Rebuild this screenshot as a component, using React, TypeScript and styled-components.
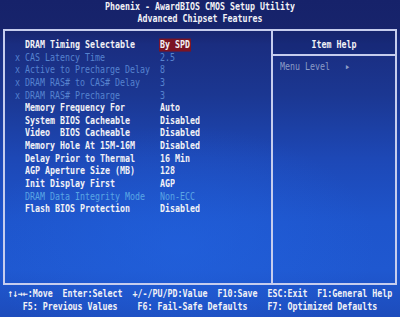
import React from "react";
import styled, { createGlobalStyle, css } from "styled-components";

const Global = createGlobalStyle`
  html, body { margin: 0; padding: 0; background: #17246a; }
  #root { width: 400px; height: 317px; overflow: hidden; }
`;

const CELL_H = 12.68;
const STRETCH = 1.3;
const TEXT_H = 9.6;
const GAP = (CELL_H - TEXT_H) / 2;

const stretched = css`
  height: ${TEXT_H}px;
  line-height: ${TEXT_H}px;
  margin: ${GAP}px 0;
  white-space: pre;
  transform: scaleY(${STRETCH});
`;

const Screen = styled.div`
  width: 400px;
  height: 317px;
  box-sizing: border-box;
  padding: 0 3px;
  display: flex;
  flex-direction: column;
  font-family: "DejaVu Sans Mono", "Liberation Mono", monospace;
  font-size: 8.3px;
  font-weight: bold;
  color: #f2f2f6;
  background:
    radial-gradient(ellipse 70% 55% at 45% 78%, rgba(34, 100, 225, 0.55), rgba(34, 100, 225, 0) 70%),
    linear-gradient(180deg, #16226a 0%, #17246c 9%, #1a2d80 14%, #1b3792 30%, #1d48b6 50%, #1e55cc 70%, #1f58d0 85%, #1d4cbc 100%);
`;

const Header = styled.header`
  height: ${CELL_H * 2}px;
  display: flex;
  flex-direction: column;
  align-items: center;
`;

const Line = styled.div`
  ${stretched}
`;

const Frame = styled.main`
  margin-top: 4px;
  height: 256px;
  box-sizing: border-box;
  border: 2px solid #c6cdee;
  display: grid;
  grid-template-columns: 268px 1fr;
`;

const LeftPanel = styled.section`
  border-right: 2px solid #c6cdee;
  padding: 7px 0 0 10px;
  display: flex;
  flex-direction: column;
`;

const Row = styled.div<{ $tone: "on" | "off" | "cyan" }>`
  ${stretched}
  display: grid;
  grid-template-columns: 10px 135px 1fr;
  color: ${(p) => (p.$tone === "on" ? "#f2f2f6" : p.$tone === "cyan" ? "#5aa6e4" : "#5683cf")};
  font-weight: ${(p) => (p.$tone === "on" ? "bold" : "normal")};
`;

const Mark = styled.span``;
const Label = styled.span``;
const Value = styled.span<{ $selected?: boolean }>`
  justify-self: start;
  padding: 0 1px;
  margin-left: -1px;
  background: ${(p) => (p.$selected ? "#7a1424" : "transparent")};
`;

const RightPanel = styled.aside`
  display: flex;
  flex-direction: column;
`;

const HelpHead = styled.div`
  height: 25px;
  padding-top: 7px;
  box-sizing: border-box;
  border-bottom: 2px solid #c6cdee;
  display: flex;
  justify-content: center;
  align-items: flex-start;
  background: rgba(16, 30, 100, 0.25);
`;

const HelpBody = styled.div`
  padding: 4px 0 0 7px;
`;

const MenuLevel = styled.div`
  ${stretched}
  font-weight: normal;
  color: #8b9bc6;
`;

const Footer = styled.footer`
  padding-top: 2px;
  display: flex;
  flex-direction: column;
  align-items: center;
`;

type Item = { mark?: boolean; label: string; value: string; tone: "on" | "off" | "cyan"; selected?: boolean };

const items: Item[] = [
  { label: "DRAM Timing Selectable", value: "By SPD", tone: "on", selected: true },
  { mark: true, label: "CAS Latency Time", value: "2.5", tone: "off" },
  { mark: true, label: "Active to Precharge Delay", value: "8", tone: "off" },
  { mark: true, label: "DRAM RAS# to CAS# Delay", value: "3", tone: "off" },
  { mark: true, label: "DRAM RAS# Precharge", value: "3", tone: "off" },
  { label: "Memory Frequency For", value: "Auto", tone: "on" },
  { label: "System BIOS Cacheable", value: "Disabled", tone: "on" },
  { label: "Video  BIOS Cacheable", value: "Disabled", tone: "on" },
  { label: "Memory Hole At 15M-16M", value: "Disabled", tone: "on" },
  { label: "Delay Prior to Thermal", value: "16 Min", tone: "on" },
  { label: "AGP Aperture Size (MB)", value: "128", tone: "on" },
  { label: "Init Display First", value: "AGP", tone: "on" },
  { label: "DRAM Data Integrity Mode", value: "Non-ECC", tone: "cyan" },
  { label: "Flash BIOS Protection", value: "Disabled", tone: "on" },
];

export default function App() {
  return (
    <>
      <Global />
      <Screen>
        <Header>
          <Line>Phoenix - AwardBIOS CMOS Setup Utility</Line>
          <Line>Advanced Chipset Features</Line>
        </Header>
        <Frame>
          <LeftPanel>
            {items.map((it) => (
              <Row key={it.label} $tone={it.tone}>
                <Mark>{it.mark ? "x" : ""}</Mark>
                <Label>{it.label}</Label>
                <Value $selected={it.selected}>{it.value}</Value>
              </Row>
            ))}
          </LeftPanel>
          <RightPanel>
            <HelpHead>
              <Line>Item Help</Line>
            </HelpHead>
            <HelpBody>
              <MenuLevel>{"Menu Level   \u25B8"}</MenuLevel>
            </HelpBody>
          </RightPanel>
        </Frame>
        <Footer>
          <Line>{"\u2191\u2193\u2192\u2190:Move  Enter:Select  +/-/PU/PD:Value  F10:Save  ESC:Exit  F1:General Help"}</Line>
          <Line>{"F5: Previous Values    F6: Fail-Safe Defaults    F7: Optimized Defaults"}</Line>
        </Footer>
      </Screen>
    </>
  );
}
